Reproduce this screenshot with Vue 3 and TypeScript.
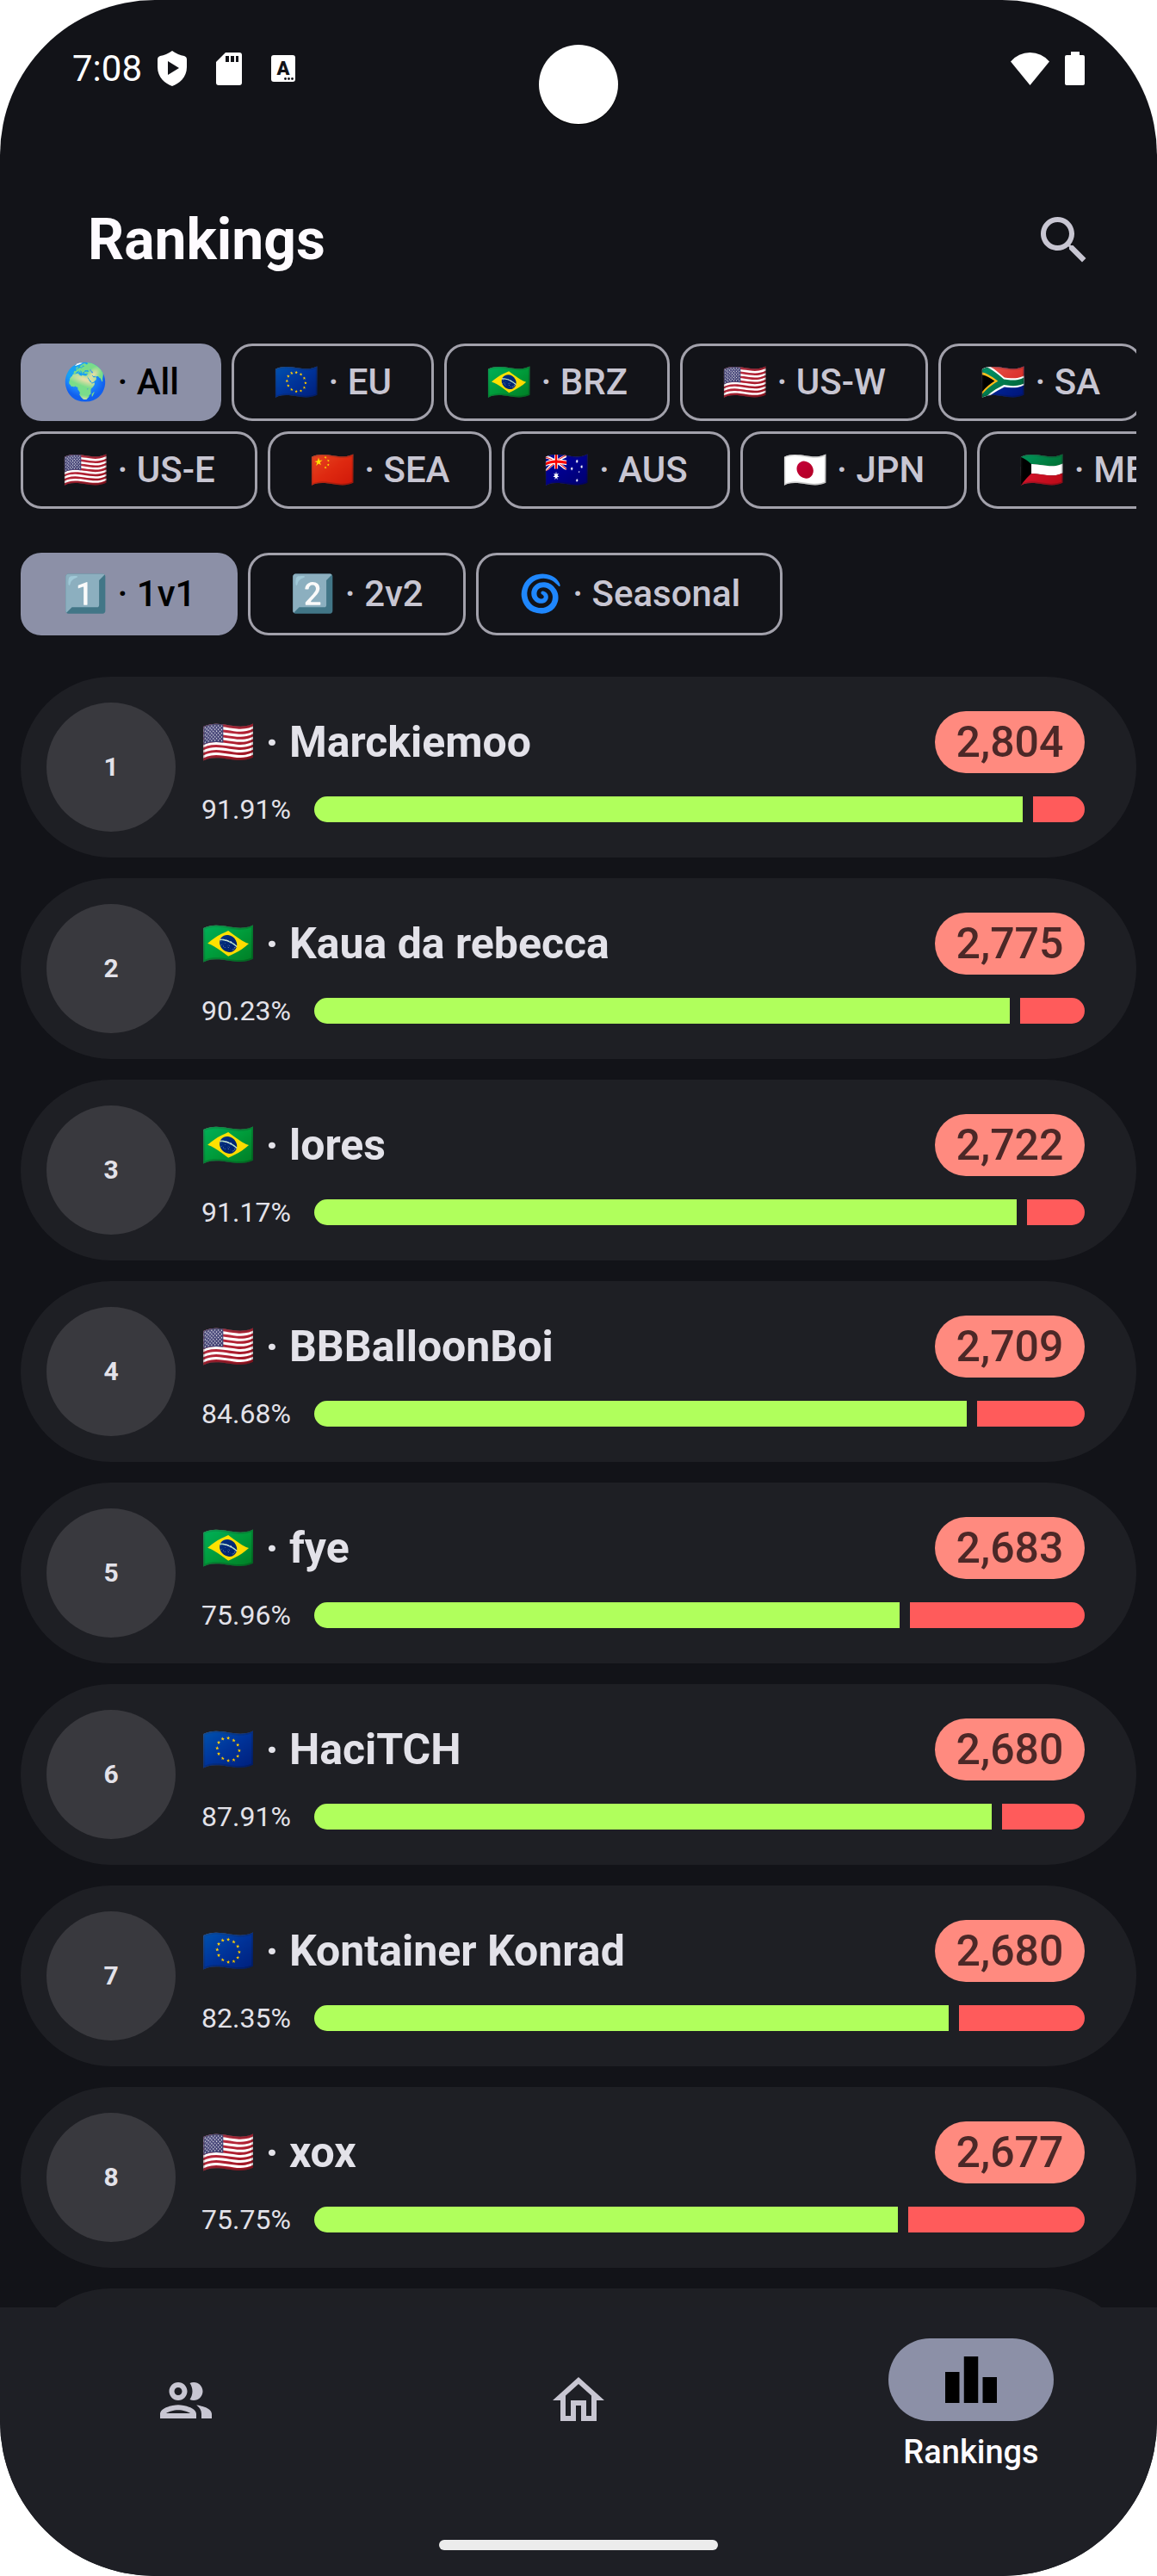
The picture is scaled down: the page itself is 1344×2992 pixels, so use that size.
<script setup lang="ts">
import { ref } from 'vue'

interface Option {
  emoji: string
  label: string
}

interface Player {
  rank: number
  emoji: string
  name: string
  winRate: number
  rating: string
}

const US = '🇺🇸'
const BR = '🇧🇷'
const EU = '🇪🇺'

const regionRows: Option[][] = [
  [
    { emoji: '🌍', label: 'All' },
    { emoji: EU, label: 'EU' },
    { emoji: BR, label: 'BRZ' },
    { emoji: US, label: 'US-W' },
    { emoji: '🇿🇦', label: 'SA' },
  ],
  [
    { emoji: US, label: 'US-E' },
    { emoji: '🇨🇳', label: 'SEA' },
    { emoji: '🇦🇺', label: 'AUS' },
    { emoji: '🇯🇵', label: 'JPN' },
    { emoji: '🇰🇼', label: 'ME' },
  ],
]

const modes: Option[] = [
  { emoji: '1️⃣', label: '1v1' },
  { emoji: '2️⃣', label: '2v2' },
  { emoji: '🌀', label: 'Seasonal' },
]

const players: Player[] = [
  { rank: 1, emoji: US, name: 'Marckiemoo', winRate: 91.91, rating: '2,804' },
  { rank: 2, emoji: BR, name: 'Kaua da rebecca', winRate: 90.23, rating: '2,775' },
  { rank: 3, emoji: BR, name: 'lores', winRate: 91.17, rating: '2,722' },
  { rank: 4, emoji: US, name: 'BBBalloonBoi', winRate: 84.68, rating: '2,709' },
  { rank: 5, emoji: BR, name: 'fye', winRate: 75.96, rating: '2,683' },
  { rank: 6, emoji: EU, name: 'HaciTCH', winRate: 87.91, rating: '2,680' },
  { rank: 7, emoji: EU, name: 'Kontainer Konrad', winRate: 82.35, rating: '2,680' },
  { rank: 8, emoji: US, name: 'xox', winRate: 75.75, rating: '2,677' },
]

const region = ref('All')
const mode = ref('1v1')
</script>

<template>
  <div class="screen">
    <div class="status-bar">
      <div class="status-left">
        <span class="time">7:08</span>
        <div class="status-icons">
          <svg width="34" height="41" viewBox="0 0 34 41" aria-hidden="true">
            <path fill="#fff" d="M17 0Q24 5 31 6Q34 7 34 10V19C34 31 25 38 17 41C9 38 0 31 0 19V10Q0 7 3 6Q10 5 17 0Z" />
            <path fill="#121318" d="M12 12L25 20L12 28Z" />
          </svg>
          <svg width="30" height="38" viewBox="0 0 30 38" aria-hidden="true">
            <path fill="#fff" d="M11 0H27Q30 0 30 3V35Q30 38 27 38H3Q0 38 0 35V11Z" />
            <path fill="#121318" d="M11 4h4v7h-4zM17 4h4v7h-4zM23 4h3v7h-3z" />
          </svg>
          <svg width="28" height="31" viewBox="0 0 28 31" aria-hidden="true">
            <rect width="28" height="31" rx="3" fill="#fff" />
            <text x="14" y="23" text-anchor="middle" class="glyph">A</text>
            <g fill="#121318">
              <circle cx="16.500" cy="27.500" r="1.400" />
              <circle cx="20.500" cy="27.500" r="1.400" />
              <circle cx="24.500" cy="27.500" r="1.400" />
            </g>
          </svg>
        </div>
      </div>
      <div class="status-right">
        <svg width="45" height="38" viewBox="0 0 45 38" aria-hidden="true">
          <path fill="#fff" d="M22.500 38L0 10.500Q9 0 22.500 0Q36 0 45 10.500Z" />
        </svg>
        <svg width="23" height="39" viewBox="0 0 23 39" aria-hidden="true">
          <path fill="#fff" d="M7 0H17V4H21Q23 4 23 6V37Q23 39 21 39H2Q0 39 0 37V6Q0 4 2 4H7Z" />
        </svg>
      </div>
      <div class="camera"></div>
    </div>

    <header class="top-bar">
      <h1>Rankings</h1>
      <button class="search" type="button" aria-label="Search">
        <svg class="icon" viewBox="0 0 24 24" aria-hidden="true">
          <path d="M15.500 14h-.79l-.28-.27C15.410 12.590 16 11.110 16 9.500 16 5.910 13.090 3 9.500 3S3 5.910 3 9.500 5.910 16 9.500 16c1.610 0 3.090-.59 4.230-1.570l.27.28v.79l5 4.990L20.490 19l-4.990-5zm-6 0C7.010 14 5 11.990 5 9.500S7.010 5 9.500 5 14 7.010 14 9.500 11.990 14 9.500 14z" />
        </svg>
      </button>
    </header>

    <section class="filters" aria-label="Region">
      <div v-for="(row, i) in regionRows" :key="i" class="chip-row">
        <button
          v-for="o in row"
          :key="o.label"
          type="button"
          class="chip"
          :class="{ selected: o.label === region }"
          :aria-pressed="o.label === region"
          @click="region = o.label"
        ><span class="emoji">{{ o.emoji }}</span> · {{ o.label }}</button>
      </div>
    </section>

    <section class="chip-row modes" aria-label="Mode">
      <button
        v-for="o in modes"
        :key="o.label"
        type="button"
        class="chip tall"
        :class="{ selected: o.label === mode }"
        :aria-pressed="o.label === mode"
        @click="mode = o.label"
      ><span class="emoji">{{ o.emoji }}</span> · {{ o.label }}</button>
    </section>

    <ol class="list">
      <li v-for="p in players" :key="p.rank" class="card">
        <div class="rank">{{ p.rank }}</div>
        <div class="body">
          <div class="head">
            <div class="name"><span class="emoji">{{ p.emoji }}</span> · {{ p.name }}</div>
            <div class="rating">{{ p.rating }}</div>
          </div>
          <div class="rate">
            <span class="percent">{{ p.winRate.toFixed(2) }}%</span>
            <div class="bar">
              <div class="wins" :style="{ width: p.winRate + '%' }"></div>
              <div class="losses"></div>
            </div>
          </div>
        </div>
      </li>
      <li class="card" aria-hidden="true"></li>
    </ol>

    <footer class="bottom">
      <nav class="nav">
        <a href="#friends" class="nav-item" aria-label="Friends">
          <svg class="icon" viewBox="0 0 24 24" aria-hidden="true">
            <path d="M9 12c1.930 0 3.500-1.570 3.500-3.500S10.930 5 9 5 5.500 6.570 5.500 8.500 7.070 12 9 12zm0-5c.83 0 1.500.67 1.500 1.500S9.830 10 9 10s-1.500-.67-1.500-1.500S8.170 7 9 7zm0 6.750c-2.340 0-7 1.170-7 3.500V19h14v-1.750c0-2.330-4.660-3.500-7-3.500zM4.340 17c.84-.58 2.870-1.250 4.660-1.250s3.820.67 4.660 1.250H4.340zm11.700-3.190c1.160.84 1.960 1.960 1.960 3.440V19h4v-1.750c0-2.020-3.500-3.170-5.960-3.440zM15 12c1.930 0 3.500-1.570 3.500-3.500S16.930 5 15 5c-.54 0-1.040.13-1.500.35.63.89 1 1.980 1 3.150s-.37 2.260-1 3.150c.46.22.96.35 1.500.35z" />
          </svg>
        </a>
        <a href="#home" class="nav-item" aria-label="Home">
          <svg class="icon" viewBox="0 0 24 24" aria-hidden="true">
            <path d="M12 5.690l5 4.500V18h-2v-6H9v6H7v-7.810l5-4.500M12 3L2 12h3v8h6v-6h2v6h6v-8h3L12 3z" />
          </svg>
        </a>
        <a href="#rankings" class="nav-item active" aria-current="page">
          <span class="pill">
            <svg class="icon" viewBox="0 0 24 24" aria-hidden="true">
              <path d="M7.500 21H2V9h5.500v12zm7.250-18h-5.500v18h5.500V3zM22 11h-5.500v10H22V11z" />
            </svg>
          </span>
          <span class="nav-label">Rankings</span>
        </a>
      </nav>
      <div class="handle"></div>
    </footer>
  </div>
</template>

<style>
body {
  margin: 0;
  background: #fff;
}
</style>

<style scoped>
.screen {
  position: relative;
  display: flex;
  flex-direction: column;
  height: 100vh;
  overflow: hidden;
  border-radius: 180px;
  background: #121318;
  color: #e3e2e9;
  font-family: Roboto, "Noto Color Emoji", sans-serif;
}

button {
  font: inherit;
  color: inherit;
  background: none;
  border: 0;
  padding: 0;
}

svg {
  display: block;
  flex: none;
}

.icon {
  width: 72px;
  height: 72px;
  fill: #c8c6d2;
}

.emoji {
  display: inline-block;
  white-space: nowrap;
}

.status-bar {
  flex: none;
  display: flex;
  justify-content: space-between;
  align-items: center;
  height: 159px;
  padding: 0 84px;
  color: #fff;
}

.status-left,
.status-right,
.status-icons {
  display: flex;
  align-items: center;
}

.status-left,
.status-right {
  gap: 18px;
}

.status-icons {
  gap: 34px;
}

.time {
  font-size: 42px;
  line-height: 48px;
}

.glyph {
  font-size: 22px;
  font-weight: 900;
  fill: #121318;
}

.camera {
  position: absolute;
  top: 52px;
  left: 50%;
  width: 92px;
  height: 92px;
  margin-left: -46px;
  border-radius: 50%;
  background: #fff;
  box-shadow: 0 1px 0 #000;
}

.top-bar {
  flex: none;
  display: flex;
  justify-content: space-between;
  align-items: center;
  height: 240px;
  padding: 0 72px 0 102px;
}

h1 {
  margin: 0;
  font-size: 66px;
  line-height: 84px;
  font-weight: 700;
  color: #fefbff;
}

.filters {
  flex: none;
  display: flex;
  flex-direction: column;
  gap: 12px;
}

.chip-row {
  flex: none;
  display: flex;
  gap: 12px;
  margin: 0 24px;
  overflow: hidden;
}

.modes {
  margin-top: 51px;
}

.chip {
  flex: none;
  box-sizing: border-box;
  height: 90px;
  padding: 0 46px;
  border: 3px solid #a2a1ab;
  border-radius: 24px;
  color: #c8c6d2;
  font-size: 42px;
  line-height: 60px;
  font-weight: 500;
  white-space: nowrap;
}

.chip.tall {
  height: 96px;
}

.chip.selected {
  background: #8c90a7;
  border-color: #8c90a7;
  color: #000;
}

.chip .emoji {
  width: 53px;
}

.list {
  flex: 1;
  min-height: 0;
  display: flex;
  flex-direction: column;
  gap: 24px;
  margin: 48px 24px 0;
  padding: 0;
  list-style: none;
  overflow: hidden;
}

.card {
  flex: none;
  box-sizing: border-box;
  display: flex;
  gap: 30px;
  min-height: 210px;
  padding: 30px 60px 30px 30px;
  border-radius: 105px;
  background: #1e1f24;
}

.rank {
  flex: none;
  display: flex;
  align-items: center;
  justify-content: center;
  width: 150px;
  height: 150px;
  border-radius: 50%;
  background: #39393e;
  font-size: 30px;
  line-height: 48px;
  font-weight: 700;
}

.body {
  flex: 1;
  min-width: 0;
  display: flex;
  flex-direction: column;
  gap: 18px;
  padding-top: 10px;
}

.head {
  display: flex;
  align-items: center;
  justify-content: space-between;
}

.name {
  font-size: 50px;
  line-height: 72px;
  font-weight: 700;
  white-space: nowrap;
}

.name .emoji {
  width: 62px;
}

.rating {
  box-sizing: border-box;
  width: 174px;
  border-radius: 36px;
  background: #ff8a7f;
  color: #4c2827;
  font-size: 50px;
  line-height: 72px;
  font-weight: 500;
  text-align: center;
}

.rate {
  display: flex;
  align-items: center;
  gap: 24px;
}

.percent {
  flex: none;
  width: 107px;
  font-size: 32px;
  line-height: 48px;
}

.bar {
  flex: 1;
  display: flex;
  gap: 12px;
  height: 30px;
  border-radius: 15px;
  overflow: hidden;
}

.wins {
  flex: none;
  background: #b0ff5c;
}

.losses {
  flex: 1;
  background: #ff5b5b;
}

.bottom {
  flex: none;
  display: flex;
  flex-direction: column;
  align-items: center;
  height: 312px;
  background: #1e1f25;
}

.nav {
  align-self: stretch;
  display: flex;
  gap: 24px;
  height: 270px;
}

.nav-item {
  flex: 1;
  box-sizing: border-box;
  display: flex;
  flex-direction: column;
  align-items: center;
  gap: 12px;
  padding-top: 72px;
  color: #fefbff;
  text-decoration: none;
}

.nav-item.active {
  padding-top: 36px;
}

.pill {
  display: flex;
  align-items: center;
  justify-content: center;
  width: 192px;
  height: 96px;
  border-radius: 48px;
  background: #8c90a7;
}

.pill .icon {
  fill: #000;
}

.nav-label {
  font-size: 38px;
  line-height: 48px;
  font-weight: 500;
}

.handle {
  width: 324px;
  height: 12px;
  border-radius: 6px;
  background: #ececec;
}
</style>
